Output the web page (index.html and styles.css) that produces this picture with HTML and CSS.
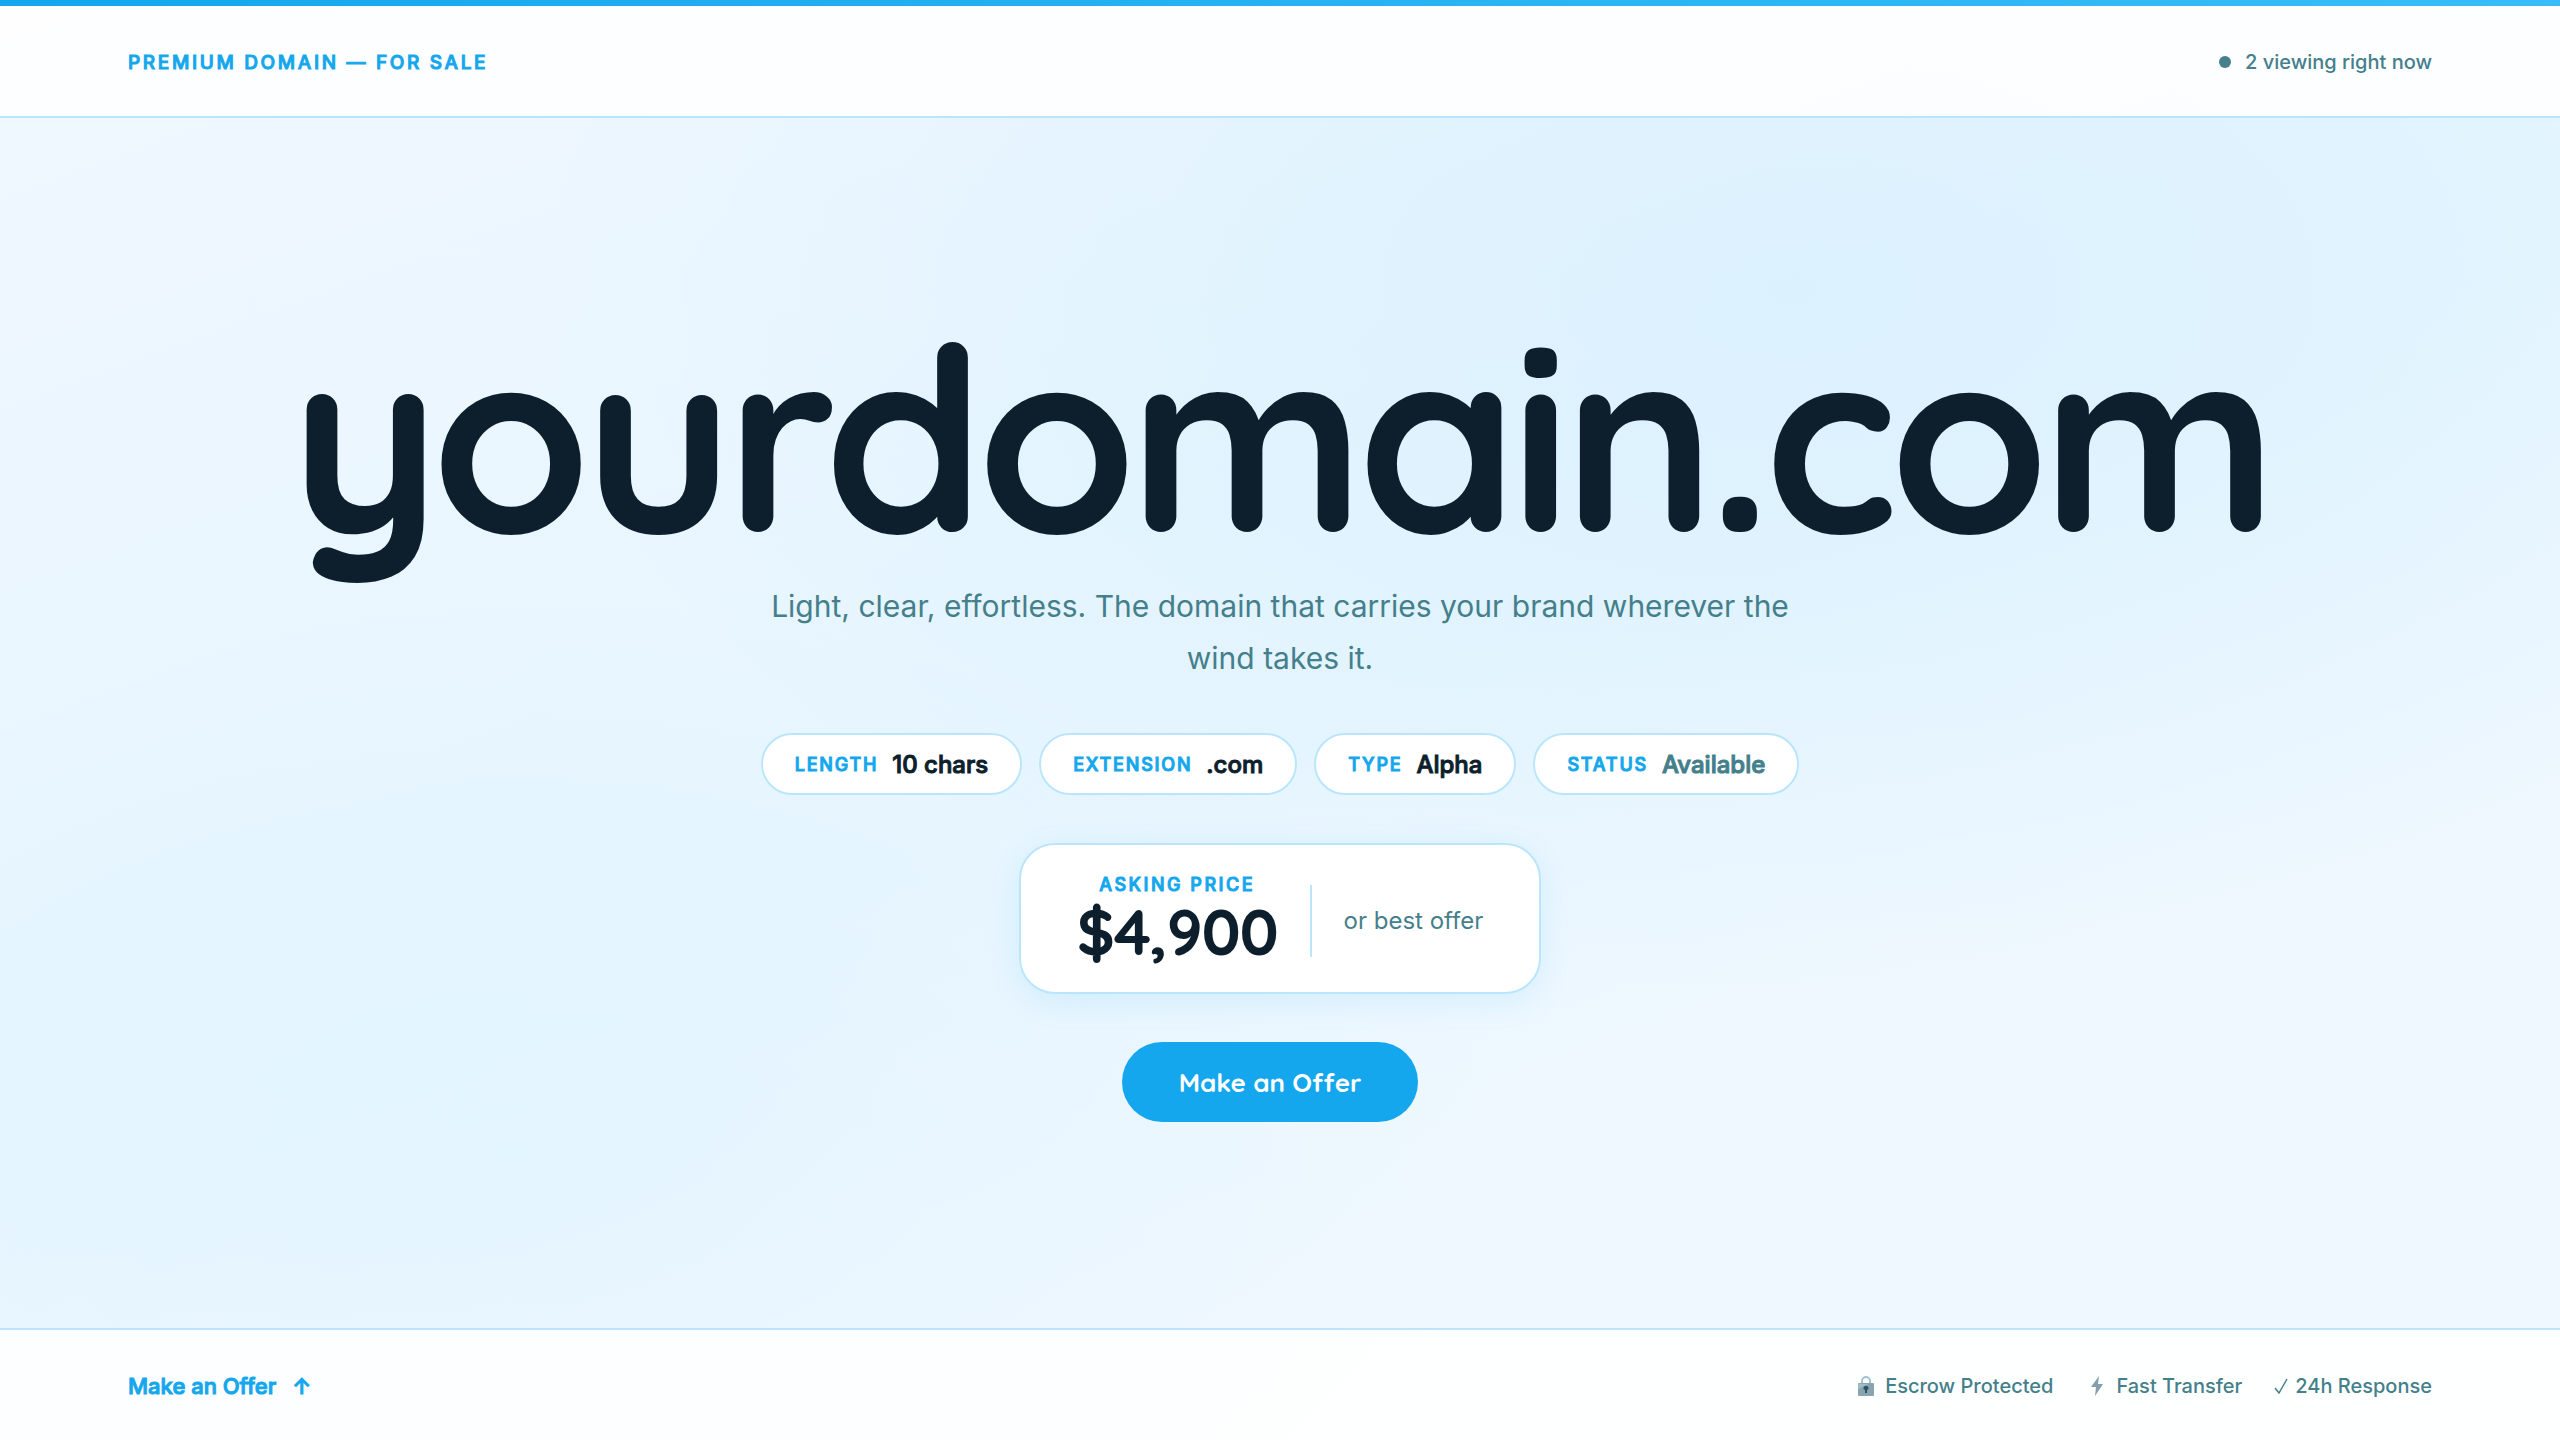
FILE: index.html
```
<!DOCTYPE html>
<html lang="en">
<head>
  <meta charset="UTF-8" />
  <meta name="viewport" content="width=device-width, initial-scale=1.0"/>
  <title>yourdomain.com</title>
  <link rel="stylesheet" href="styles.css">
</head>
<body>

  <header class="topbar">
    <span class="eyebrow">Premium Domain — For Sale</span>
    <span class="viewers"><span class="dot"></span>2 viewing right now</span>
  </header>

  <main class="hero">
    <h1 class="domain">yourdomain.com</h1>
    <p class="tagline">Light, clear, effortless. The domain that carries your brand wherever the wind takes it.</p>

    <ul class="pills">
      <li class="pill"><span class="label">Length</span><span class="value">10 chars</span></li>
      <li class="pill"><span class="label">Extension</span><span class="value">.com</span></li>
      <li class="pill"><span class="label">Type</span><span class="value">Alpha</span></li>
      <li class="pill"><span class="label">Status</span><span class="value available">Available</span></li>
    </ul>

    <div class="price-card">
      <div class="price">
        <span class="label price-label">Asking Price</span>
        <span class="amount">$4,900</span>
      </div>
      <span class="obo">or best offer</span>
    </div>

    <button class="cta" type="button">Make an Offer</button>
  </main>

  <footer class="bottombar">
    <a class="offer-link" href="#">Make an Offer <span>↑</span></a>
    <ul class="trust">
      <li>
        <svg class="icon" viewBox="0 0 24 20" aria-hidden="true">
          <path d="M8 8V5a4 4 0 0 1 8 0v3" fill="none" stroke="#a3c4cf" stroke-width="2"/>
          <rect x="4" y="7" width="16" height="13" rx="1" fill="#88a4b0"/>
          <path d="M4 8h10L4 13z" fill="#9dbcc7"/>
          <path d="M12 10a2 2 0 0 1 1 4v3h-2v-3a2 2 0 0 1 1-4z" fill="#28535f"/>
        </svg>
        Escrow Protected
      </li>
      <li>
        <svg class="icon" viewBox="0 0 24 20" aria-hidden="true">
          <path d="M14 0L6 11h5l-1 9 8-12h-5z" fill="#829fab"/>
        </svg>
        Fast Transfer
      </li>
      <li>
        <svg class="check" viewBox="0 0 14 16" aria-hidden="true">
          <path d="M1 10l4 5L13 1" fill="none" stroke="#457f8b" stroke-width="1.5"/>
        </svg>
        24h Response
      </li>
    </ul>
  </footer>

</body>
</html>
```
FILE: styles.css
```
* {
  box-sizing: border-box;
  margin: 0;
  padding: 0;
}
body {
  min-height: 100vh;
  display: flex;
  flex-direction: column;
  font-family: Inter, 'Liberation Sans', sans-serif;
  color: #0d1f2d;
  background:
    radial-gradient(ellipse 50% 50% at 70% 20%, rgba(14, 165, 233, 0.06), rgba(14, 165, 233, 0.04) 40%, transparent),
    radial-gradient(ellipse 40% 40% at 20% 80%, rgba(56, 189, 248, 0.04), transparent),
    linear-gradient(160deg, #f0f7ff 0%, #e8f6ff 40%, #e8f6ff 50%, #f0f8ff 75%);
}
ul {
  list-style: none;
}

/* Bars */
.topbar,
.bottombar {
  display: flex;
  justify-content: space-between;
  align-items: center;
  height: 112px;
  padding: 2px 5% 0;
  background: rgba(255, 255, 255, 0.88);
}
.topbar {
  height: 118px;
  padding-top: 0;
  border-top: 6px solid #0ea5e9;
  border-image: linear-gradient(90deg, #14a7ed, #38bdf8) 1;
  border-width: 6px 0 0;
  box-shadow: inset 0 -2px #bae6fd;
}
.bottombar {
  border-top: 2px solid #bae6fd;
}
.eyebrow,
.label,
.value,
.offer-link {
  font-weight: 500;
  -webkit-text-stroke: 1px currentColor;
}
.eyebrow,
.label {
  color: #14a7ed;
  font-size: 18px;
  letter-spacing: 0.1em;
  text-transform: uppercase;
}
.eyebrow {
  font-size: 19px;
  letter-spacing: 0.14em;
}
.viewers {
  display: flex;
  align-items: center;
  gap: 14px;
  color: #457f8b;
  font-size: 20px;
  font-weight: 500;
}
.dot {
  width: 12px;
  height: 12px;
  border-radius: 50%;
  background: currentColor;
}

/* Hero */
.hero {
  flex: 1;
  display: flex;
  flex-direction: column;
  align-items: center;
  justify-content: center;
  padding-bottom: 16px;
  text-align: center;
}
.domain {
  margin-bottom: 16px;
  font-family: Quicksand, Inter, sans-serif;
  font-size: 256px;
  font-weight: 700;
  line-height: 1;
  letter-spacing: -0.03em;
}
.tagline {
  max-width: 1040px;
  margin-bottom: 49px;
  color: #457f8b;
  font-size: 30px;
  line-height: 52px;
}
.pills {
  display: flex;
  gap: 17px;
  margin-bottom: 48px;
}
.pill {
  display: flex;
  align-items: center;
  gap: 14px;
  height: 62px;
  padding: 0 32px;
  border: 2px solid #bae6fd;
  border-radius: 31px;
  background: #fff;
}
.value {
  font-size: 24px;
}
.available {
  color: #457f8b;
}
.price-card {
  display: flex;
  align-items: center;
  margin-bottom: 48px;
  padding: 29px 56px 25px;
  border: 2px solid #bae6fd;
  border-radius: 36px;
  background: #fff;
  box-shadow: 0 8px 32px rgba(14, 165, 233, 0.1);
}
.price {
  display: flex;
  flex-direction: column;
  align-items: center;
}
.price-label {
  letter-spacing: 0.14em;
}
.amount {
  font-family: Quicksand, Inter, sans-serif;
  font-size: 64px;
  font-weight: 700;
  line-height: 72px;
  letter-spacing: -0.02em;
}
.obo {
  margin-left: 32px;
  padding: 21px 0 21px 32px;
  border-left: 2px solid #bae6fd;
  color: #457f8b;
  font-size: 24px;
  line-height: 30px;
}
.cta {
  height: 80px;
  margin-right: 20px;
  padding: 0 57px;
  border: none;
  border-radius: 40px;
  background: #14a7ed;
  color: #fff;
  font-family: Quicksand, Inter, sans-serif;
  font-size: 26px;
  font-weight: 700;
  cursor: pointer;
}
.cta:hover {
  background: #0284c7;
}

/* Footer */
.offer-link {
  display: flex;
  gap: 16px;
  color: #14a7ed;
  font-size: 22px;
  text-decoration: none;
}
.trust {
  display: flex;
  gap: 32px;
  color: #457f8b;
  font-size: 20px;
  font-weight: 500;
}
.trust li {
  display: flex;
  align-items: center;
  gap: 7px;
}
.icon {
  width: 24px;
  height: 20px;
}
.check {
  width: 14px;
  height: 16px;
}
```
